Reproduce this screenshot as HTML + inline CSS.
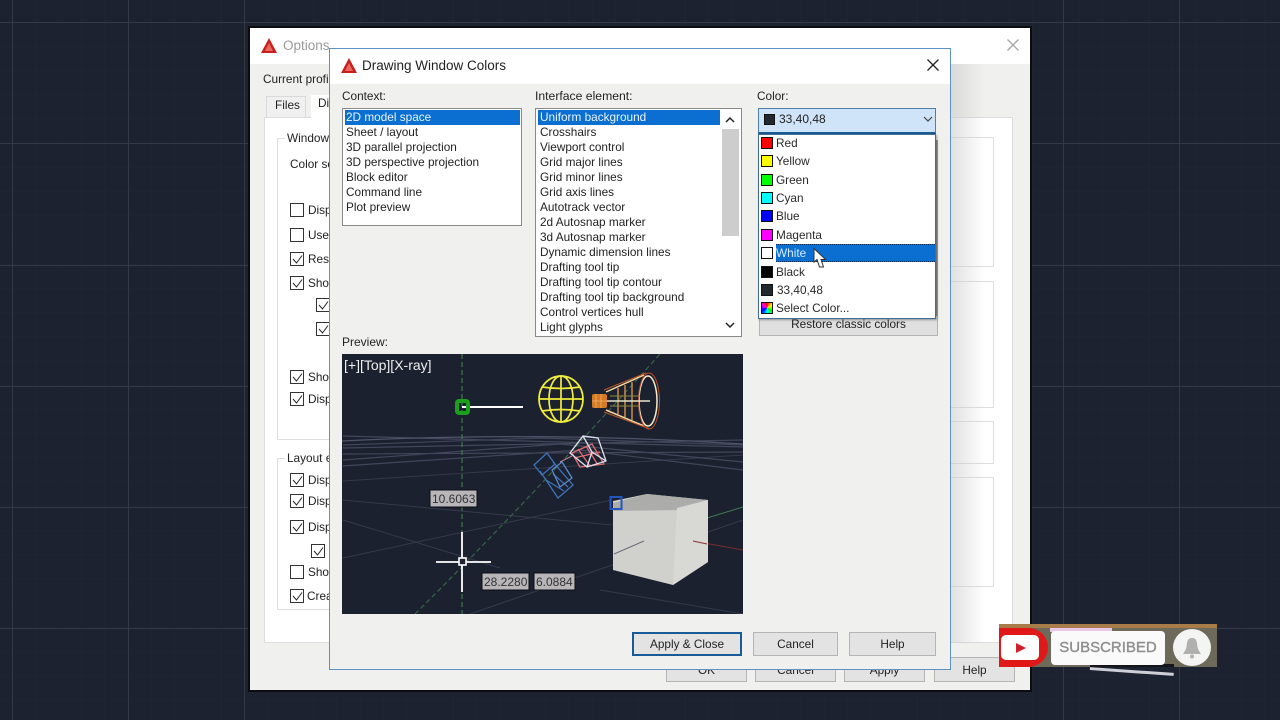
<!DOCTYPE html>
<html><head><meta charset="utf-8"><title>Drawing Window Colors</title>
<style>
*{box-sizing:border-box}
html,body{margin:0;padding:0;width:1280px;height:720px;overflow:hidden;background:#1c2230}
body{position:relative;font-family:"Liberation Sans",sans-serif;font-size:11.8px;color:#222}
#w{position:absolute;left:0;top:0;width:1280px;height:720px;overflow:hidden;filter:blur(.35px)}
.a{position:absolute}
.t{position:absolute;white-space:nowrap;line-height:15px}
.gb{position:absolute;border:1px solid #dedede}
.cb{position:absolute;width:14px;height:14px;border:1px solid #333;background:#fff}
.cb svg{position:absolute;left:1px;top:1px}
.btn{position:absolute;background:#e3e3e3;border:1px solid #b4b4b4;text-align:center;line-height:24px;color:#222}
.list{position:absolute;background:#fff;border:1px solid #8a8a8a}
.row{position:absolute;left:3px;height:15px;line-height:15px;white-space:nowrap}
.sw{position:absolute;left:761px;width:12px;height:12px;border:1px solid #111}
.ci{position:absolute;left:776px;line-height:15px;white-space:nowrap;color:#2a2a2a}
</style></head><body><div id="w">

<svg class="a" style="left:0;top:0" width="1280" height="720">
<defs>
<pattern id="m" width="23.2" height="24.2" patternUnits="userSpaceOnUse" x="12" y="22"><path d="M0 0V25M0 0H24" stroke="#212633" stroke-width="1" fill="none"/></pattern>
</defs>
<rect width="1280" height="720" fill="#1c2230"/>
<rect width="1280" height="720" fill="url(#m)"/>
<g stroke="#343944" stroke-width="1">
<path d="M12.500 0V720M128.500 0V720M244.500 0V720M1063.500 0V720M1179.500 0V720"/>
<path d="M0 22.500H1280M0 143.500H1280M0 265.500H1280M0 386.500H1280M0 507.500H1280M0 628.500H1280"/>
</g>
</svg>

<!-- Options window behind -->
<div class="a" style="left:248px;top:26px;width:784px;height:666px;background:#0b0c10"></div>
<div class="a" style="left:250px;top:28px;width:780px;height:662px;background:#f0f0ee"></div>
<div class="a" style="left:250px;top:28px;width:780px;height:36px;background:#fff"></div>
<svg class="a" style="left:261px;top:38px" width="16" height="16"><path d="M8 0L16 15H0Z" fill="#c8201f"/><path d="M8 5L12 13H4Z" fill="#e86a60"/></svg>
<div class="t" style="left:283px;top:38px;font-size:13.500px;color:#9a9a9a">Options</div>
<svg class="a" style="left:1006px;top:38px" width="14" height="14"><path d="M1.500 1.500L12.500 12.500M12.500 1.500L1.500 12.500" stroke="#a8a8a8" stroke-width="1.400"/></svg>
<div class="t" style="left:263px;top:72px;color:#222">Current profile</div>
<div class="a" style="left:266px;top:96px;width:40px;height:22px;background:#f0f0f0;border:1px solid #d9d9d9;border-bottom:0"></div>
<div class="t" style="left:275px;top:98px">Files</div>
<div class="a" style="left:264px;top:117px;width:749px;height:526px;background:#fff;border:1px solid #dcdcdc"></div>
<div class="a" style="left:311px;top:95px;width:30px;height:24px;background:#fff"></div>
<div class="t" style="left:318px;top:96px">Di</div>

<div class="gb" style="left:277px;top:138px;width:70px;height:302px"></div>
<div class="a" style="left:285px;top:130px;width:50px;height:16px;background:#fff"></div>
<div class="t" style="left:287px;top:131px">Window</div>
<div class="t" style="left:290px;top:157px">Color sc</div>
<div class="cb" style="left:290px;top:203px"></div><div class="t" style="left:308px;top:203px">Disp</div>
<div class="cb" style="left:290px;top:228px"></div><div class="t" style="left:308px;top:228px">Use</div>
<div class="cb" style="left:290px;top:252px"><svg width="11" height="11"><path d="M1 5L4.500 9L10 1.500" stroke="#222" fill="none"/></svg></div><div class="t" style="left:308px;top:252px">Res</div>
<div class="cb" style="left:290px;top:276px"><svg width="11" height="11"><path d="M1 5L4.500 9L10 1.500" stroke="#222" fill="none"/></svg></div><div class="t" style="left:308px;top:276px">Sho</div>
<div class="cb" style="left:316px;top:298px"><svg width="11" height="11"><path d="M1 5L4.500 9L10 1.500" stroke="#222" fill="none"/></svg></div>
<div class="cb" style="left:316px;top:322px"><svg width="11" height="11"><path d="M1 5L4.500 9L10 1.500" stroke="#222" fill="none"/></svg></div>
<div class="cb" style="left:290px;top:370px"><svg width="11" height="11"><path d="M1 5L4.500 9L10 1.500" stroke="#222" fill="none"/></svg></div><div class="t" style="left:308px;top:370px">Sho</div>
<div class="cb" style="left:290px;top:392px"><svg width="11" height="11"><path d="M1 5L4.500 9L10 1.500" stroke="#222" fill="none"/></svg></div><div class="t" style="left:308px;top:392px">Disp</div>

<div class="gb" style="left:277px;top:458px;width:70px;height:152px"></div>
<div class="a" style="left:285px;top:450px;width:50px;height:16px;background:#fff"></div>
<div class="t" style="left:287px;top:451px">Layout e</div>
<div class="cb" style="left:290px;top:473px"><svg width="11" height="11"><path d="M1 5L4.500 9L10 1.500" stroke="#222" fill="none"/></svg></div><div class="t" style="left:308px;top:473px">Disp</div>
<div class="cb" style="left:290px;top:494px"><svg width="11" height="11"><path d="M1 5L4.500 9L10 1.500" stroke="#222" fill="none"/></svg></div><div class="t" style="left:308px;top:494px">Disp</div>
<div class="cb" style="left:290px;top:520px"><svg width="11" height="11"><path d="M1 5L4.500 9L10 1.500" stroke="#222" fill="none"/></svg></div><div class="t" style="left:308px;top:520px">Disp</div>
<div class="cb" style="left:311px;top:544px"><svg width="11" height="11"><path d="M1 5L4.500 9L10 1.500" stroke="#222" fill="none"/></svg></div>
<div class="cb" style="left:290px;top:565px"></div><div class="t" style="left:308px;top:565px">Sho</div>
<div class="cb" style="left:290px;top:589px"><svg width="11" height="11"><path d="M1 5L4.500 9L10 1.500" stroke="#222" fill="none"/></svg></div><div class="t" style="left:307px;top:589px">Crea</div>

<div class="gb" style="left:940px;top:137px;width:54px;height:130px"></div>
<div class="gb" style="left:940px;top:281px;width:54px;height:127px"></div>
<div class="gb" style="left:940px;top:421px;width:54px;height:43px"></div>
<div class="gb" style="left:940px;top:477px;width:54px;height:110px"></div>
<div class="a" style="left:951px;top:64px;width:34px;height:579px;background:linear-gradient(90deg,rgba(200,200,200,.55),rgba(255,255,255,0))"></div>

<div class="btn" style="left:666px;top:657px;width:81px;height:25px;line-height:25px">OK</div>
<div class="btn" style="left:755px;top:657px;width:81px;height:25px;line-height:25px">Cancel</div>
<div class="btn" style="left:844px;top:657px;width:81px;height:25px;line-height:25px">Apply</div>
<div class="btn" style="left:934px;top:657px;width:81px;height:25px;line-height:25px">Help</div>

<!-- Drawing Window Colors dialog -->
<div class="a" style="left:329px;top:48px;width:622px;height:622px;background:#f0f0ee;border:1px solid #5a93c4"></div>
<div class="a" style="left:330px;top:49px;width:620px;height:35px;background:#fff"></div>
<svg class="a" style="left:341px;top:58px" width="16" height="15"><path d="M8 0L16 15H0Z" fill="#c8201f"/><path d="M8 5L12 13H4Z" fill="#e86a60"/></svg>
<div class="t" style="left:362px;top:57px;font-size:13.500px;line-height:17px;color:#222">Drawing Window Colors</div>
<svg class="a" style="left:926px;top:58px" width="14" height="14"><path d="M1.500 1.500L12.500 12.500M12.500 1.500L1.500 12.500" stroke="#222" stroke-width="1.300"/></svg>

<div class="t" style="left:342px;top:89px">Context:</div>
<div class="list" style="left:342px;top:108px;width:180px;height:118px">
<div class="a" style="left:2px;top:1px;width:175px;height:15px;background:#0a6fd0"></div>
<div class="row" style="top:1px;color:#eaf3ff">2D model space</div>
<div class="row" style="top:16px">Sheet / layout</div>
<div class="row" style="top:31px">3D parallel projection</div>
<div class="row" style="top:46px">3D perspective projection</div>
<div class="row" style="top:61px">Block editor</div>
<div class="row" style="top:76px">Command line</div>
<div class="row" style="top:91px">Plot preview</div>
</div>

<div class="t" style="left:535px;top:89px;font-size:12.200px">Interface element:</div>
<div class="list" style="left:535px;top:108px;width:207px;height:229px">
<div class="a" style="left:2px;top:1px;width:182px;height:15px;background:#0a6fd0"></div>
<div class="row" style="left:4px;top:1px;color:#eaf3ff">Uniform background</div>
<div class="row" style="left:4px;top:16px">Crosshairs</div>
<div class="row" style="left:4px;top:31px">Viewport control</div>
<div class="row" style="left:4px;top:46px">Grid major lines</div>
<div class="row" style="left:4px;top:61px">Grid minor lines</div>
<div class="row" style="left:4px;top:76px">Grid axis lines</div>
<div class="row" style="left:4px;top:91px">Autotrack vector</div>
<div class="row" style="left:4px;top:106px">2d Autosnap marker</div>
<div class="row" style="left:4px;top:121px">3d Autosnap marker</div>
<div class="row" style="left:4px;top:136px">Dynamic dimension lines</div>
<div class="row" style="left:4px;top:151px">Drafting tool tip</div>
<div class="row" style="left:4px;top:166px">Drafting tool tip contour</div>
<div class="row" style="left:4px;top:181px">Drafting tool tip background</div>
<div class="row" style="left:4px;top:196px">Control vertices hull</div>
<div class="row" style="left:4px;top:211px">Light glyphs</div>
<div class="a" style="left:186px;top:20px;width:17px;height:107px;background:#cdcdcd"></div>
<svg class="a" style="left:188px;top:7px" width="12" height="8"><path d="M2 6L6 2L10 6" stroke="#222" stroke-width="1.500" fill="none"/></svg>
<svg class="a" style="left:188px;top:212px" width="12" height="8"><path d="M2 2L6 6L10 2" stroke="#222" stroke-width="1.500" fill="none"/></svg>
</div>

<div class="t" style="left:757px;top:89px">Color:</div>
<div class="a" style="left:758px;top:108px;width:178px;height:26px;background:#cfe4f8;border:1px solid #4d7fa8;border-bottom:2px solid #1c5c94"></div>
<div class="a" style="left:764px;top:114px;width:11px;height:11px;background:#21282f;border:1px solid #111"></div>
<div class="t" style="left:779px;top:112px;font-size:12px">33,40,48</div>
<svg class="a" style="left:922px;top:115px" width="12" height="9"><path d="M2 2L6 6L10 2" stroke="#444" stroke-width="1.200" fill="none"/></svg>

<div class="btn" style="left:759px;top:312px;width:179px;height:24px;line-height:23px;background:#dfdfdf">Restore classic colors</div>
<div class="a" style="left:936px;top:140px;width:2px;height:176px;background:#999"></div>
<div class="a" style="left:758px;top:134px;width:178px;height:185px;background:#fff;border:1px solid #3f6f96;box-shadow:1px 1px 2px rgba(0,0,0,.35)"></div>
<div class="a" style="left:776px;top:244px;width:159px;height:18px;background:#0a6fd0;border-top:1px dotted #0a2f60;border-bottom:1px dotted #0a2f60"></div>
<div class="sw" style="top:137px;background:#f00"></div><div class="ci" style="top:136px">Red</div>
<div class="sw" style="top:155px;background:#ff0"></div><div class="ci" style="top:154px">Yellow</div>
<div class="sw" style="top:174px;background:#0f0"></div><div class="ci" style="top:173px">Green</div>
<div class="sw" style="top:192px;background:#0ff"></div><div class="ci" style="top:191px">Cyan</div>
<div class="sw" style="top:210px;background:#00f"></div><div class="ci" style="top:209px">Blue</div>
<div class="sw" style="top:229px;background:#f0f"></div><div class="ci" style="top:228px">Magenta</div>
<div class="sw" style="top:247px;background:#fff"></div><div class="ci" style="top:246px;color:#d8ecff">White</div>
<div class="sw" style="top:266px;background:#000"></div><div class="ci" style="top:265px">Black</div>
<div class="sw" style="top:284px;background:#21282f"></div><div class="ci" style="top:283px;left:777px">33,40,48</div>
<div class="sw" style="top:302px;background:conic-gradient(#f00,#ff0,#0f0,#0ff,#00f,#f0f,#f00)"></div><div class="ci" style="top:301px">Select Color...</div>
<svg class="a" style="left:810px;top:247px" width="18" height="24"><path d="M4 1.500L4 15L7 12.500L9.500 20H13.500L11 12.500H15.500Z" fill="#fff" stroke="#333" stroke-width="1"/></svg>

<div class="t" style="left:342px;top:335px;font-size:12px">Preview:</div>
<svg class="a" style="left:342px;top:354px" width="401" height="260" viewBox="342 354 401 260">
<rect x="342" y="354" width="401" height="260" fill="#1c2130"/>
<g stroke="#353949" stroke-width="1" fill="none">
<path d="M343 500L612 525M343 520L500 568M343 558L612 500M470 614L743 520M600 590L743 614M343 481L743 455"/>
</g>
<g stroke="#42465a" stroke-width="1.200" fill="none">
<path d="M343 445L540 438L743 445M343 448L743 440M343 454L743 452M343 460L560 444L743 462M343 466L580 450L743 470M343 436L743 447"/>
<path d="M342 441Q540 431 743 444" stroke="#50546a"/>
</g>
<path d="M462 354V614" stroke="#3f8a50" stroke-dasharray="5 3" fill="none"/>
<path d="M415 614Q520 510 660 354" stroke="#3a7049" stroke-dasharray="5 3" fill="none"/>
<path d="M707 518L743 507" stroke="#3f7a50"/>
<path d="M693 541L743 550" stroke="#7a2c2c"/>
<path d="M462 407H523" stroke="#fff" stroke-width="2"/>
<rect x="457" y="401" width="11" height="12" rx="2" fill="none" stroke="#1aa01a" stroke-width="4"/>
<!-- sphere -->
<g fill="none" stroke="#f0ec3c" stroke-width="1.700">
<ellipse cx="561" cy="399" rx="22" ry="23"/>
<ellipse cx="561" cy="399" rx="12" ry="23"/>
<path d="M561 376V422"/>
<path d="M542 387Q561 390 580 387M538.500 399H583.500M542 411Q561 408 580 411"/>
</g>
<!-- cone light -->
<g fill="none" stroke-width="1.500">
<path d="M606 392L644 375M606 410L644 426" stroke="#f4d6a0"/>
<path d="M604 390L646 373M604 412L650 429" stroke="#c05a28" stroke-width="1"/>
<ellipse cx="648" cy="401" rx="9" ry="25" stroke="#f8ecc8"/>
<ellipse cx="649" cy="401" rx="10.500" ry="28" stroke="#b84a28" stroke-width="1"/>
<path d="M618 388V414M625 385V417M632 382V420" stroke="#d08a40"/>
<path d="M596 401H650" stroke="#e8e4c8"/>
<path d="M610 396L640 396M610 406L640 406" stroke="#8a8a40" stroke-width="1"/>
</g>
<rect x="592" y="394" width="15" height="14" rx="2" fill="#d57a20"/>
<path d="M596 394V408M601 394V408M592 401H607" stroke="#f0b070" stroke-width=".8"/>
<!-- cameras -->
<g fill="none" stroke="#3c72b8" stroke-width="1.300"><path d="M534 465L547 453L555 464L542 475ZM540 471L558 498L573 485L553 462M546 480L564 491M553 474L568 487"/><path d="M552 470L562 462L572 478L560 487Z" stroke="#5a88c8"/></g>
<g fill="none" stroke="#d86c70" stroke-width="1.300"><path d="M572 453L592 444L604 464L580 467ZM578 449L590 466M586 446L598 465M574 458L600 452"/></g>
<g fill="none" stroke="#dfe0ee" stroke-width="1.300"><path d="M570 453L583 436L598 438L606 461L587 467ZM583 436L592 452L606 461M592 452L587 467"/></g>
<path d="M560 462L572 456" stroke="#c08090"/>
<!-- cube -->
<path d="M613 501L647 494L708 500V562L673 585L613 570Z" fill="#d0d0cc"/>
<path d="M613 503L647 494L708 500L680 510L614 511Z" fill="#acacaa"/>
<path d="M677 508L708 500V562L673 585Z" fill="#d8d8d4"/>
<path d="M644 541L614 554" stroke="#6c6c78"/>
<path d="M693 541L707 544" stroke="#8a3030"/>
<rect x="610.500" y="497" width="11" height="12" fill="none" stroke="#2456c0" stroke-width="2"/>
<path d="M462 532V592M436 562H491" stroke="#fff" stroke-width="1.800"/>
<rect x="459" y="558" width="7" height="7" fill="#223" stroke="#fff" stroke-width="1.600"/>
<rect x="430" y="490" width="47" height="17" fill="#b8b6b8" stroke="#0c0c10" stroke-width="1"/>
<rect x="482" y="573" width="47" height="17" fill="#b8b6b8" stroke="#0c0c10" stroke-width="1"/>
<rect x="534" y="573" width="41" height="17" fill="#b8b6b8" stroke="#0c0c10" stroke-width="1"/>
<g font-family="Liberation Sans" font-size="12" fill="#333">
<text x="432" y="503">10.6063</text><text x="484" y="586">28.2280</text><text x="536" y="586">6.0884</text>
</g>
<text x="344" y="370" font-family="Liberation Sans" font-size="14" fill="#eee">[+][Top][X-ray]</text>
</svg>

<div class="btn" style="left:632px;top:632px;width:110px;height:24px;border:2px solid #1a5a98;line-height:21px">Apply &amp; Close</div>
<div class="btn" style="left:753px;top:632px;width:85px;height:24px;line-height:23px">Cancel</div>
<div class="btn" style="left:849px;top:632px;width:87px;height:24px;line-height:23px">Help</div>

<!-- Subscribed overlay -->
<div class="a" style="left:1090px;top:664px;width:84px;height:9px;border-bottom:3px solid #cfcfd8;transform:rotate(4deg)"></div>
<div class="a" style="left:999px;top:624px;width:218px;height:43px;background:#6e6a5a"></div>
<div class="a" style="left:1090px;top:664px;width:84px;height:3px;background:#14141a"></div>
<div class="a" style="left:999px;top:624px;width:218px;height:4px;background:#a87c48"></div>
<div class="a" style="left:1050px;top:628px;width:62px;height:4px;background:#e8c8e8"></div>
<div class="a" style="left:999px;top:628px;width:49px;height:39px;background:#e01818;border-radius:0 20px 20px 0"></div>
<div class="a" style="left:1001px;top:635px;width:38px;height:25px;background:#fff;border-radius:5px"></div>
<svg class="a" style="left:1015px;top:642px" width="12" height="12"><path d="M1 1L11 6L1 11Z" fill="#d0202a"></path></svg>
<div class="a" style="left:1051px;top:631px;width:114px;height:34px;background:#fafafa;border-radius:4px;text-align:center;line-height:34px;font-size:15px;color:#8f8f8f;-webkit-text-stroke:.4px #8f8f8f">SUBSCRIBED</div>
<div class="a" style="left:1173px;top:629px;width:38px;height:37px;background:#f4f4f2;border-radius:50%"></div>
<svg class="a" style="left:1181px;top:635px" width="22" height="25"><path d="M11 3C6 3 6 8 5.500 12C5 15 3 17 2 19H20C19 17 17 15 16.500 12C16 8 16 3 11 3Z" fill="#b0b0ae"/><circle cx="11" cy="21.500" r="2" fill="#b0b0ae"/></svg>
</div></body></html>
